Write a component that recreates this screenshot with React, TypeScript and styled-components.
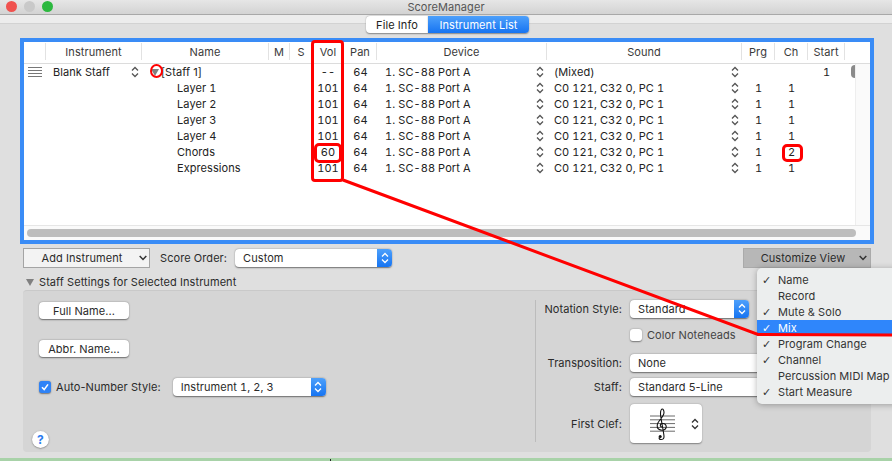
import React from "react";
import styled, { createGlobalStyle } from "styled-components";

const Global = createGlobalStyle`
  html, body { margin: 0; padding: 0; background: #a8d2a8; }
  body { font-family: "Inter", "Liberation Sans", sans-serif; font-size: 11px; color: #222; letter-spacing: 0.07px; }
  * { box-sizing: border-box; }
`;

const Page = styled.div`
  position: relative; width: 892px; height: 461px; overflow: hidden; background: #a8d2a8;
`;
const Win = styled.div`
  height: 458px; background: #dfdfdf; display: flex; flex-direction: column;
`;
const TitleBar = styled.div`
  height: 15px; flex: none; position: relative; display: flex; align-items: center; justify-content: center;
  background: linear-gradient(#e6e6e6, #d3d3d3); border-bottom: 1px solid #a8a8a8; color: #555; font-size: 11px;
`;
const Lights = styled.div`
  position: absolute; left: 6px; top: 1px; display: flex; gap: 7px;
`;
const Light = styled.span<{ $c: string }>`
  width: 11px; height: 11px; border-radius: 50%; background: ${p => p.$c};
`;
const TabStrip = styled.div`
  height: 23px; flex: none; display: flex; justify-content: center; align-items: flex-start; padding: 1px 0 0 3px;
  background: linear-gradient(#ececec 0, #ececec 8px, #d2d2d2 8px, #d2d2d2 9px, #dfdfdf 9px);
`;
const Tab = styled.div<{ $on?: boolean; $w: number }>`
  width: ${p => p.$w}px; height: 17px; display: flex; align-items: center; justify-content: center;
  background: ${p => p.$on ? "linear-gradient(#4da0fb, #1674f2)" : "#fff"};
  color: ${p => p.$on ? "#fff" : "#222"};
  border-radius: ${p => p.$on ? "0 4px 4px 0" : "4px 0 0 4px"};
  box-shadow: 0 0.5px 1.5px rgba(0,0,0,.4);
`;
const Ring = styled.div`
  flex: none; height: 206px; margin: 0 18px 0 20px; border: 4px solid #3a8cf6; background: #fff; display: flex; flex-direction: column;
`;
const grid = "22px 96px 127px 21px 22px 32px 33px 170px 195px 33px 33px 37px 10px";
const Header = styled.div`
  flex: none; height: 22px; padding-bottom: 2px; display: grid; grid-template-columns: ${grid} 15px; align-items: center; border-bottom: 1px solid #dcdcdc; color: #3a3a3a;
`;
const HCell = styled.div<{ $line?: boolean }>`
  height: 17px; display: flex; align-items: center; justify-content: center; ${p => p.$line ? "border-right: 1px solid #e2e2e2;" : ""}
`;
const Main = styled.div`
  flex: 1; display: flex; min-height: 0;
`;
const Rows = styled.div`
  width: 831px; position: relative;
`;
const Gutter = styled.div`
  flex: 1; background: #fafafa; border-left: 1px solid #eee;
`;
const Row = styled.div`
  height: 16px; display: grid; grid-template-columns: ${grid}; align-items: center; color: #222; font-feature-settings: "tnum" 1;
`;
const Cell = styled.div<{ $pad?: number; $center?: boolean }>`
  display: flex; align-items: center; justify-content: ${p => p.$center ? "center" : "space-between"};
  padding-left: ${p => p.$pad ?? 0}px; white-space: nowrap; height: 16px; min-width: 0;
`;
const ChevBox = styled.span`
  display: inline-flex; margin-right: 3px;
`;
const Handle = styled.span`
  width: 14px; height: 10px; margin-left: 4px; display: block;
  background: repeating-linear-gradient(#777 0, #777 1px, transparent 1px, transparent 3px);
`;
const StaffName = styled.span`
  flex: 1; padding-left: 2px; font-feature-settings: "tnum" 0;
`;
const ScrollThumbV = styled.span`
  position: absolute; right: 0; top: 1px; width: 4px; height: 13px; border-radius: 6px 0 0 6px; background: #8a8a8a;
`;
const HScroll = styled.div`
  flex: none; height: 15px; padding: 3px 0 0 3px; border-top: 1px solid #e6e6e6; background: #fafafa;
`;
const HThumb = styled.div`
  height: 8px; width: 829px; background: #bdbdbd; border-radius: 4px;
`;
const Toolbar = styled.div`
  flex: none; height: 30px; display: flex; align-items: center; padding: 4px 21px 6px 23px;
`;
const Square = styled.div<{ $dark?: boolean; $w: number; $gap: number; $pad: number }>`
  width: ${p => p.$w}px; height: 20px; display: flex; align-items: center; justify-content: center; gap: ${p => p.$gap}px; position: relative;
  background: ${p => p.$dark ? "#b7b7b7" : "#f3f3f3"}; border: 1px solid ${p => p.$dark ? "#aaa" : "#a4a4a4"};
  color: #2b2b2b; padding-left: ${p => p.$pad}px;
`;
const ToolLabel = styled.span`
  margin: 0 8px 0 10px; color: #2b2b2b;
`;
const Spacer = styled.div`
  flex: 1;
`;
const Select = styled.div<{ $w: number; $tnum?: boolean }>`
  width: ${p => p.$w}px; height: 18px; display: flex; align-items: center; justify-content: space-between; flex: none;
  background: #fff; border-radius: 4px; box-shadow: 0 0.5px 1.5px rgba(0,0,0,.5); padding-left: 8px; overflow: hidden; color: #2a2a2a;
  font-feature-settings: "tnum" ${p => p.$tnum ? 1 : 0};
`;
const Stepper = styled.span`
  width: 15px; height: 100%; background: linear-gradient(#4da0fb, #1674f2); display: flex; align-items: center; justify-content: center;
`;
const SectionHead = styled.div`
  flex: none; height: 16px; display: flex; align-items: center; gap: 5px; padding-left: 26px; color: #2b2b2b;
`;
const Tri = styled.span`
  width: 0; height: 0; border-left: 4px solid transparent; border-right: 4px solid transparent; border-top: 7px solid #808080; flex: none;
`;
const Panel = styled.div`
  flex: none; height: 162px; margin: 0 21px 0 23px; background: #d5d5d5; border-radius: 4px; border-top: 1px solid #c9c9c9; display: flex; position: relative;
`;
const LeftCol = styled.div`
  width: 512px; padding: 11px 0 0 16px; display: flex; flex-direction: column; align-items: flex-start;
`;
const PushBtn = styled.div`
  width: 90px; height: 17px; margin-bottom: 21px; background: #fff; border-radius: 4px; box-shadow: 0 0.5px 1.5px rgba(0,0,0,.5);
  display: flex; align-items: center; justify-content: center; color: #2a2a2a;
`;
const AutoRow = styled.div`
  display: flex; align-items: center; height: 18px; color: #2a2a2a;
`;
const Check = styled.span<{ $on?: boolean }>`
  width: 12px; height: 12px; border-radius: 3px; flex: none; display: flex; align-items: center; justify-content: center;
  background: ${p => p.$on ? "#2f83f7" : "#fff"}; box-shadow: 0 0.5px 1.5px rgba(0,0,0,.45);
`;
const AutoLabel = styled.span`
  margin: 0 12px 0 5px;
`;
const Help = styled.div`
  position: absolute; left: 9px; bottom: 4px; width: 17px; height: 17px; border-radius: 50%; background: #fff; box-shadow: 0 0.5px 1.5px rgba(0,0,0,.5);
  color: #2b7cf0; font-weight: 700; font-size: 12px; display: flex; align-items: center; justify-content: center;
`;
const RightCol = styled.div`
  margin: 9px 0 10px; border-left: 1px solid #bcbcbc; padding-left: 8px; width: 336px; display: flex; flex-direction: column;
`;
const FormRow = styled.div<{ $mb: number }>`
  display: flex; align-items: center; gap: 8px; margin-bottom: ${p => p.$mb}px;
`;
const FormLabel = styled.span`
  width: 78px; flex: none; text-align: right; color: #2a2a2a; white-space: nowrap;
`;
const CheckText = styled.span`
  margin-left: -3px; color: #444;
`;
const ClefBox = styled.div`
  width: 72px; height: 39px; background: #fff; border-radius: 4px; box-shadow: 0 0.5px 1.5px rgba(0,0,0,.4);
  display: flex; align-items: center; justify-content: space-between; padding: 0 3px 0 20px;
`;
const Menu = styled.div`
  position: absolute; left: 757px; top: 268px; width: 140px; height: 136px; padding: 4px 0; background: #eceeee;
  border-radius: 5px 0 0 5px; box-shadow: 0 1px 6px rgba(0,0,0,.3); z-index: 2;
`;
const MenuItem = styled.div<{ $on?: boolean }>`
  height: 16px; display: flex; align-items: center; white-space: nowrap; color: ${p => p.$on ? "#fff" : "#333"};
  background: ${p => p.$on ? "#2f86fb" : "transparent"};
`;
const Tick = styled.span`
  width: 21px; padding-left: 5px; font-family: "DejaVu Sans", sans-serif; font-size: 11px; font-weight: 700; flex: none;
`;
const RedBox = styled.div<{ $x: number; $y: number; $w: number; $h: number; $round?: string; $b?: number }>`
  position: absolute; left: ${p => p.$x}px; top: ${p => p.$y}px; width: ${p => p.$w}px; height: ${p => p.$h}px;
  border: ${p => p.$b ?? 3}px solid #f00; border-radius: ${p => p.$round ?? "4px"}; z-index: 3;
`;
const Overlay = styled.svg`
  position: absolute; left: 0; top: 0; z-index: 3; pointer-events: none;
`;
const BottomMark = styled.div`
  position: absolute; left: 330px; bottom: 0; width: 1px; height: 2px; background: #222;
`;

const UpDown = ({ color = "#555" }: { color?: string }) => (
  <svg width="8" height="12" viewBox="0 0 8 12" fill="none" stroke={color} strokeWidth="1.3">
    <path d="M1 4.5 4 1.5 7 4.5" />
    <path d="M1 7.5 4 10.5 7 7.5" />
  </svg>
);
const Down = () => (
  <svg width="8" height="6" viewBox="0 0 8 6" fill="none" stroke="#333" strokeWidth="1.5">
    <path d="M.7 1 4 4.5 7.3 1" />
  </svg>
);
const CheckMark = () => (
  <svg width="10" height="10" viewBox="0 0 10 10" fill="none" stroke="#fff" strokeWidth="1.6">
    <path d="M2 5.2 4.2 7.6 8 2.4" />
  </svg>
);
const BlueStep = () => <Stepper><UpDown color="#fff" /></Stepper>;
const Clef = () => (
  <svg width="26" height="34" viewBox="0 0 26 34">
    <g stroke="#444" strokeWidth="0.8">
      <line x1="0" x2="25" y1="9" y2="9" />
      <line x1="0" x2="25" y1="12.8" y2="12.8" />
      <line x1="0" x2="25" y1="16.6" y2="16.6" />
      <line x1="0" x2="25" y1="20.4" y2="20.4" />
      <line x1="0" x2="25" y1="24.2" y2="24.2" />
    </g>
    <path d="M12 20c-2 0-2.500-3 0-3.500 3-.5 5 2 4 4.500-1 2.500-5 3-7.500 1-2.500-2.500-1-6 1-8.500 2-2.500 4.500-5 4.500-8 0-2-1-3.500-1.500-3.500-1 0-2 2-2 5 0 3 3 17 3.500 22 .3 3-1.500 3.500-3 3.500-1 0-2-.8-2-2" fill="none" stroke="#111" strokeWidth="1.1" />
    <circle cx="10.200" cy="29.500" r="1.500" fill="#111" />
  </svg>
);

const layers: [string, string, string, string, string][] = [
  ["Layer 1", "101", "C0 121, C32 0, PC 1", "1", "1"],
  ["Layer 2", "101", "C0 121, C32 0, PC 1", "1", "1"],
  ["Layer 3", "101", "C0 121, C32 0, PC 1", "1", "1"],
  ["Layer 4", "101", "C0 121, C32 0, PC 1", "1", "1"],
  ["Chords", "60", "C0 121, C32 0, PC 1", "1", "2"],
  ["Expressions", "101", "C0 121, C32 0, PC 1", "1", "1"],
];
const heads: [string, boolean][] = [
  ["", true], ["Instrument", true], ["Name", true], ["M", true], ["S", false], ["Vol", false], ["Pan", true],
  ["Device", true], ["Sound", true], ["Prg", true], ["Ch", true], ["Start", true], ["", false], ["", false],
];
const menu: [string, boolean][] = [
  ["Name", true], ["Record", false], ["Mute & Solo", true], ["Mix", true], ["Program Change", true],
  ["Channel", true], ["Percussion MIDI Map", false], ["Start Measure", true],
];

export default function App() {
  return (
    <Page>
      <Global />
      <Win>
        <TitleBar>
          <Lights>
            <Light $c="#f0524f" />
            <Light $c="#c9c9c9" />
            <Light $c="#2cb83f" />
          </Lights>
          ScoreManager
        </TitleBar>
        <TabStrip>
          <Tab $w={62}>File Info</Tab>
          <Tab $w={101} $on>Instrument List</Tab>
        </TabStrip>
        <Ring>
          <Header>
            {heads.map(([h, l], i) => <HCell key={i} $line={l}>{h}</HCell>)}
          </Header>
          <Main>
            <Rows>
              <Row>
                <Cell><Handle /></Cell>
                <Cell $pad={7}>Blank Staff<ChevBox><UpDown /></ChevBox></Cell>
                <Cell $pad={9}><Tri /><StaffName>[Staff 1]</StaffName></Cell>
                <Cell /><Cell />
                <Cell $center>--</Cell>
                <Cell $center>64</Cell>
                <Cell $pad={8}>1. SC-88 Port A<ChevBox><UpDown /></ChevBox></Cell>
                <Cell $pad={7}>(Mixed)<ChevBox><UpDown /></ChevBox></Cell>
                <Cell /><Cell />
                <Cell $center>1</Cell>
                <Cell />
              </Row>
              {layers.map(([n, v, s, p, c]) => (
                <Row key={n}>
                  <Cell /><Cell />
                  <Cell $pad={35}>{n}</Cell>
                  <Cell /><Cell />
                  <Cell $center>{v}</Cell>
                  <Cell $center>64</Cell>
                  <Cell $pad={8}>1. SC-88 Port A<ChevBox><UpDown /></ChevBox></Cell>
                  <Cell $pad={7}>{s}<ChevBox><UpDown /></ChevBox></Cell>
                  <Cell $center>{p}</Cell>
                  <Cell $center>{c}</Cell>
                  <Cell /><Cell />
                </Row>
              ))}
              <ScrollThumbV />
            </Rows>
            <Gutter />
          </Main>
          <HScroll><HThumb /></HScroll>
        </Ring>
        <Toolbar>
          <Square $w={127} $gap={17} $pad={16}>Add Instrument<Down /></Square>
          <ToolLabel>Score Order:</ToolLabel>
          <Select $w={157}>Custom<BlueStep /></Select>
          <Spacer />
          <Square $w={128} $dark $gap={14} $pad={14}>Customize View<Down /></Square>
        </Toolbar>
        <SectionHead><Tri />Staff Settings for Selected Instrument</SectionHead>
        <Panel>
          <LeftCol>
            <PushBtn>Full Name...</PushBtn>
            <PushBtn>Abbr. Name...</PushBtn>
            <AutoRow>
              <Check $on><CheckMark /></Check>
              <AutoLabel>Auto-Number Style:</AutoLabel>
              <Select $w={153} $tnum>Instrument 1, 2, 3<BlueStep /></Select>
            </AutoRow>
            <Help>?</Help>
          </LeftCol>
          <RightCol>
            <FormRow $mb={10}>
              <FormLabel>Notation Style:</FormLabel>
              <Select $w={119}>Standard<BlueStep /></Select>
            </FormRow>
            <FormRow $mb={12}>
              <FormLabel />
              <Check /><CheckText>Color Noteheads</CheckText>
            </FormRow>
            <FormRow $mb={6}>
              <FormLabel>Transposition:</FormLabel>
              <Select $w={140}>None</Select>
            </FormRow>
            <FormRow $mb={8}>
              <FormLabel>Staff:</FormLabel>
              <Select $w={140}>Standard 5-Line</Select>
            </FormRow>
            <FormRow $mb={0}>
              <FormLabel>First Clef:</FormLabel>
              <ClefBox><Clef /><UpDown color="#333" /></ClefBox>
            </FormRow>
          </RightCol>
        </Panel>
      </Win>
      <BottomMark />
      <Menu>
        {menu.map(([m, c]) => (
          <MenuItem key={m} $on={m === "Mix"}><Tick>{c ? "✓" : ""}</Tick>{m}</MenuItem>
        ))}
      </Menu>
      <RedBox $x={311} $y={40} $w={33} $h={142} />
      <RedBox $x={314} $y={143} $w={28} $h={20} $round="5px" />
      <RedBox $x={782} $y={144} $w={21} $h={18} $round="5px" />
      <RedBox $x={150} $y={64} $w={13} $h={14} $round="50%" $b={2.5} />
      <Overlay width="892" height="461" viewBox="0 0 892 461">
        <path d="M343 180 758 334.500 892 335" fill="none" stroke="#f00" strokeWidth="3" />
      </Overlay>
    </Page>
  );
}
